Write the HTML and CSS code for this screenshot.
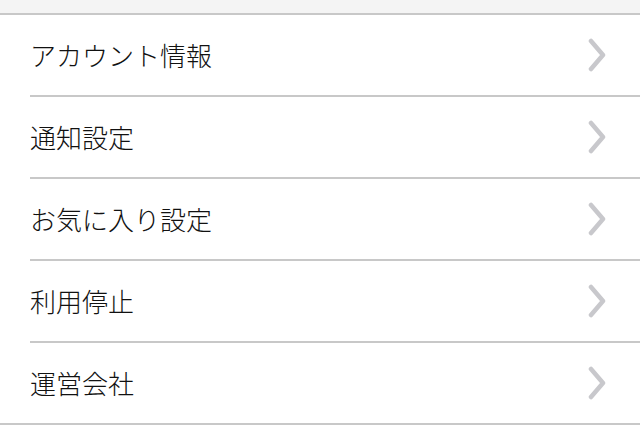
FILE: index.html
```html
<html lang="ja">
<head>
    <meta charset="UTF-8">
    <meta name="viewport" content="width=device-width, initial-scale=1.0">
    <title>設定</title>
    <link rel="stylesheet" href="styles.css">
</head>
<body>
    <div class="top-space"></div>
    <ul class="menu">
        <li class="menu-item">
            <span class="label">アカウント情報</span>
            <svg class="chevron" width="18" height="34" viewBox="0 0 18 34"><path d="M3 3 L15 17 L3 31" /></svg>
        </li>
        <li class="menu-item">
            <span class="label">通知設定</span>
            <svg class="chevron" width="18" height="34" viewBox="0 0 18 34"><path d="M3 3 L15 17 L3 31" /></svg>
        </li>
        <li class="menu-item">
            <span class="label">お気に入り設定</span>
            <svg class="chevron" width="18" height="34" viewBox="0 0 18 34"><path d="M3 3 L15 17 L3 31" /></svg>
        </li>
        <li class="menu-item">
            <span class="label">利用停止</span>
            <svg class="chevron" width="18" height="34" viewBox="0 0 18 34"><path d="M3 3 L15 17 L3 31" /></svg>
        </li>
        <li class="menu-item">
            <span class="label">運営会社</span>
            <svg class="chevron" width="18" height="34" viewBox="0 0 18 34"><path d="M3 3 L15 17 L3 31" /></svg>
        </li>
    </ul>
</body>
</html>
```

FILE: styles.css
```css
body {
    margin: 0;
    background: #fff;
    font-family: "Noto Sans CJK JP", "Noto Sans", sans-serif;
    color: #111;
}

.top-space {
    height: 13px;
    background-color: #f4f4f4;
}

.menu {
    list-style: none;
    margin: 0;
    padding: 0;
    border-top: 2px solid #c8c8c8;
    border-bottom: 2px solid #c8c8c8;
}

.menu-item {
    display: flex;
    align-items: center;
    justify-content: space-between;
    height: 80px;
    margin-left: 30px;
    padding-right: 34px;
    border-bottom: 2px solid #c8c8c8;
}

.menu-item:last-child {
    border-bottom: none;
}

.label {
    font-size: 26px;
    font-weight: 300;
    line-height: 1;
}

.chevron path {
    fill: none;
    stroke: #c8c8cc;
    stroke-width: 4.5;
    stroke-linecap: round;
    stroke-linejoin: round;
}
```
